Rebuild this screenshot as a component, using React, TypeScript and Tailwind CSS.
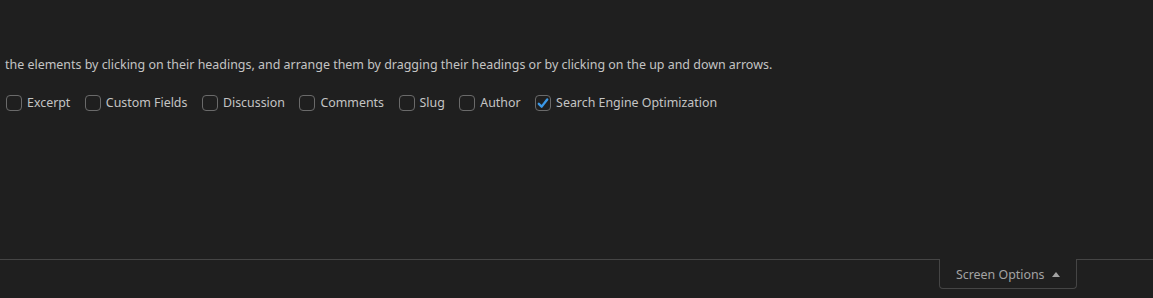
const FIELDS = [
  { label: "Excerpt", checked: false },
  { label: "Custom Fields", checked: false },
  { label: "Discussion", checked: false },
  { label: "Comments", checked: false },
  { label: "Slug", checked: false },
  { label: "Author", checked: false },
  { label: "Search Engine Optimization", checked: true },
];

function Checkbox({ checked }: { checked: boolean }) {
  return (
    <span className="flex h-4 w-4 shrink-0 items-center justify-center rounded-[4px] border border-[#6a6a6a] bg-[#1f1f1f]">
      {checked && (
        <svg viewBox="0 0 16 16" className="h-[15px] w-[15px]">
          <path d="M3.2 8.4 L6.5 11.6 L12.8 3.4" fill="none" stroke="#3b98e6" strokeWidth="2.7" strokeLinecap="round" strokeLinejoin="round" />
        </svg>
      )}
    </span>
  );
}

export default function App() {
  return (
    <div
      className="flex h-[298px] w-full flex-col overflow-hidden bg-[#1f1f1f] text-[12.4px] text-[#c4c4c4]"
      style={{ fontFamily: '"Noto Sans", "Open Sans", sans-serif' }}
    >
      <p className="mt-[55px] whitespace-nowrap pl-[5px] text-[12.45px] leading-5">
        the elements by clicking on their headings, and arrange them by dragging their headings or by clicking on the up and down arrows.
      </p>

      <div className="mt-5 flex items-center gap-[14.5px] pl-[6px]">
        {FIELDS.map((f) => (
          <label key={f.label} className="flex items-center gap-[5px] leading-4 whitespace-nowrap">
            <Checkbox checked={f.checked} />
            <span>{f.label}</span>
          </label>
        ))}
      </div>

      {/* Screen options tab */}
      <div className="mb-[9px] mt-auto flex items-start">
        <div className="h-px w-[939px] bg-[#454545]" />
        <button className="flex h-[30px] items-center gap-[7px] rounded-b-[4px] border-x border-b border-[#454545] pl-4 pr-[16px] pt-[3px] text-[12.4px] text-[#a3a3a3]">
          <span>Screen Options</span>
          <svg viewBox="0 0 8 5" className="mb-[2px] h-[5px] w-2">
            <path d="M0 5 L4 0 L8 5 Z" fill="#a3a3a3" />
          </svg>
        </button>
        <div className="h-px flex-1 bg-[#454545]" />
      </div>
    </div>
  );
}
